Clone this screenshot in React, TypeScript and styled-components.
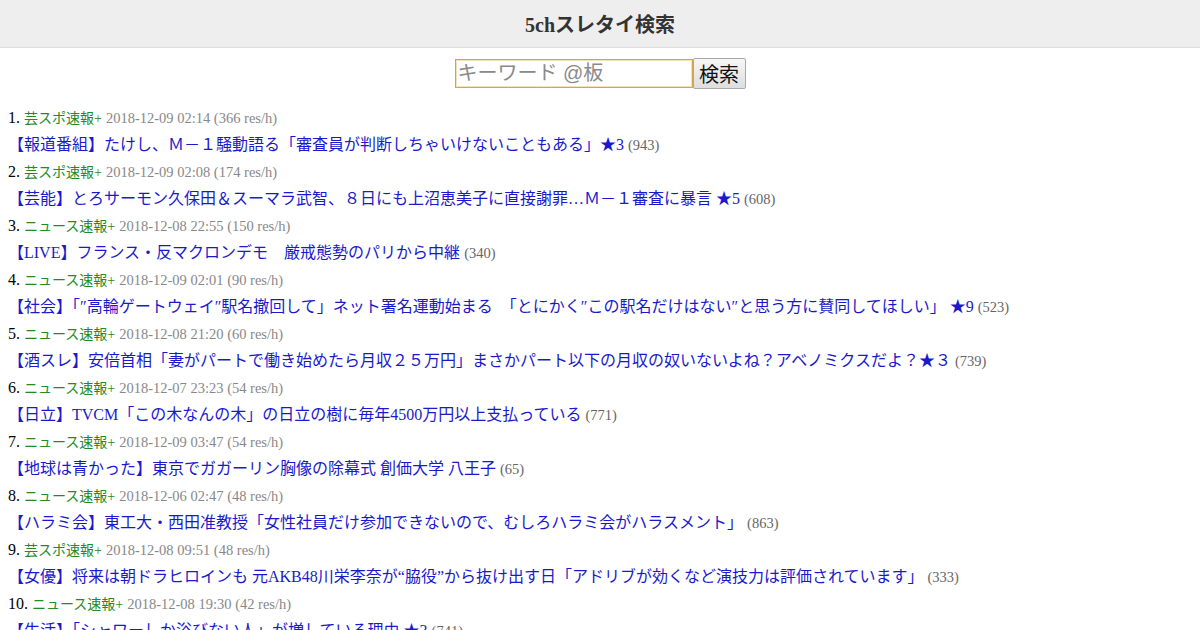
import React from 'react';
import styled, { createGlobalStyle } from 'styled-components';

type Thread = {
  board: string;
  date: string;
  speed: number;
  title: string;
  res: number;
};

const threads: Thread[] = [
  { board: '芸スポ速報+', date: '2018-12-09 02:14', speed: 366, title: '【報道番組】たけし、Ｍ－１騒動語る「審査員が判断しちゃいけないこともある」★3', res: 943 },
  { board: '芸スポ速報+', date: '2018-12-09 02:08', speed: 174, title: '【芸能】とろサーモン久保田＆スーマラ武智、８日にも上沼恵美子に直接謝罪…Ｍ－１審査に暴言 ★5', res: 608 },
  { board: 'ニュース速報+', date: '2018-12-08 22:55', speed: 150, title: '【LIVE】フランス・反マクロンデモ　厳戒態勢のパリから中継', res: 340 },
  { board: 'ニュース速報+', date: '2018-12-09 02:01', speed: 90, title: '【社会】「″高輪ゲートウェイ″駅名撤回して」ネット署名運動始まる　「とにかく″この駅名だけはない″と思う方に賛同してほしい」 ★9', res: 523 },
  { board: 'ニュース速報+', date: '2018-12-08 21:20', speed: 60, title: '【酒スレ】安倍首相「妻がパートで働き始めたら月収２５万円」まさかパート以下の月収の奴いないよね？アベノミクスだよ？★３', res: 739 },
  { board: 'ニュース速報+', date: '2018-12-07 23:23', speed: 54, title: '【日立】TVCM「この木なんの木」の日立の樹に毎年4500万円以上支払っている', res: 771 },
  { board: 'ニュース速報+', date: '2018-12-09 03:47', speed: 54, title: '【地球は青かった】東京でガガーリン胸像の除幕式 創価大学 八王子', res: 65 },
  { board: 'ニュース速報+', date: '2018-12-06 02:47', speed: 48, title: '【ハラミ会】東工大・西田准教授「女性社員だけ参加できないので、むしろハラミ会がハラスメント」', res: 863 },
  { board: '芸スポ速報+', date: '2018-12-08 09:51', speed: 48, title: '【女優】将来は朝ドラヒロインも 元AKB48川栄李奈が“脇役”から抜け出す日「アドリブが効くなど演技力は評価されています」', res: 333 },
  { board: 'ニュース速報+', date: '2018-12-08 19:30', speed: 42, title: '【生活】「シャワーしか浴びない人」が増している理由 ★3', res: 741 },
];

const GlobalStyle = createGlobalStyle`
  body {
    margin: 0;
    background: #fff;
    font-family: "Liberation Serif", "Noto Sans CJK JP", serif;
  }
`;

const Header = styled.header`
  height: 47px;
  background: #eeeeee;
  border-bottom: 1px solid #dddddd;
  display: flex;
  align-items: center;
  justify-content: center;
`;

const Title = styled.h1`
  margin: 0;
  font-size: 20px;
  font-weight: bold;
  color: #333;
`;

const SearchForm = styled.form`
  display: flex;
  justify-content: center;
  align-items: center;
  padding-top: 10px;
  height: 31px;
`;

const Input = styled.input`
  box-sizing: border-box;
  width: 238px;
  height: 29px;
  padding: 0 2px;
  border: 1px solid #d4a54a;
  box-shadow: inset 0 0 0 1px #f3e1b8;
  outline: none;
  font-size: 20px;
  font-family: "Liberation Sans", "Noto Sans CJK JP", sans-serif;
  color: #333;

  &::placeholder {
    color: #8a8a8a;
  }
`;

const Button = styled.button`
  box-sizing: border-box;
  height: 31px;
  width: 53px;
  padding: 0;
  font-size: 20px;
  font-family: "Liberation Sans", "Noto Sans CJK JP", sans-serif;
  color: #111;
  background: linear-gradient(#f6f6f6, #dedede);
  border: 1px solid #a9a9a9;
  border-radius: 2px;
`;

const List = styled.div`
  padding: 16px 8px 0;
`;

const Item = styled.div``;

const Meta = styled.div`
  height: 26px;
  line-height: 26px;
  font-size: 16px;
  color: #000;
`;

const Board = styled.a`
  font-size: 14px;
  color: #228b22;
  text-decoration: none;
`;

const Info = styled.span`
  font-size: 14.5px;
  color: #888;
`;

const TitleLine = styled.div`
  height: 28px;
  line-height: 28px;
  white-space: nowrap;
`;

const ThreadLink = styled.a`
  font-size: 16px;
  color: #1a1acc;
  text-decoration: none;
`;

const Count = styled.span`
  font-size: 14.5px;
  color: #666;
`;

const App: React.FC = () => {
  return (
    <>
      <GlobalStyle />
      <Header>
        <Title>5chスレタイ検索</Title>
      </Header>
      <SearchForm onSubmit={(e) => e.preventDefault()}>
        <Input type="text" placeholder="キーワード @板" />
        <Button type="submit">検索</Button>
      </SearchForm>
      <List>
        {threads.map((t, i) => (
          <Item key={i}>
            <Meta>
              {i + 1}. <Board href="#">{t.board}</Board> <Info>{t.date} ({t.speed} res/h)</Info>
            </Meta>
            <TitleLine>
              <ThreadLink href="#">{t.title}</ThreadLink> <Count>({t.res})</Count>
            </TitleLine>
          </Item>
        ))}
      </List>
    </>
  );
};

export default App;
